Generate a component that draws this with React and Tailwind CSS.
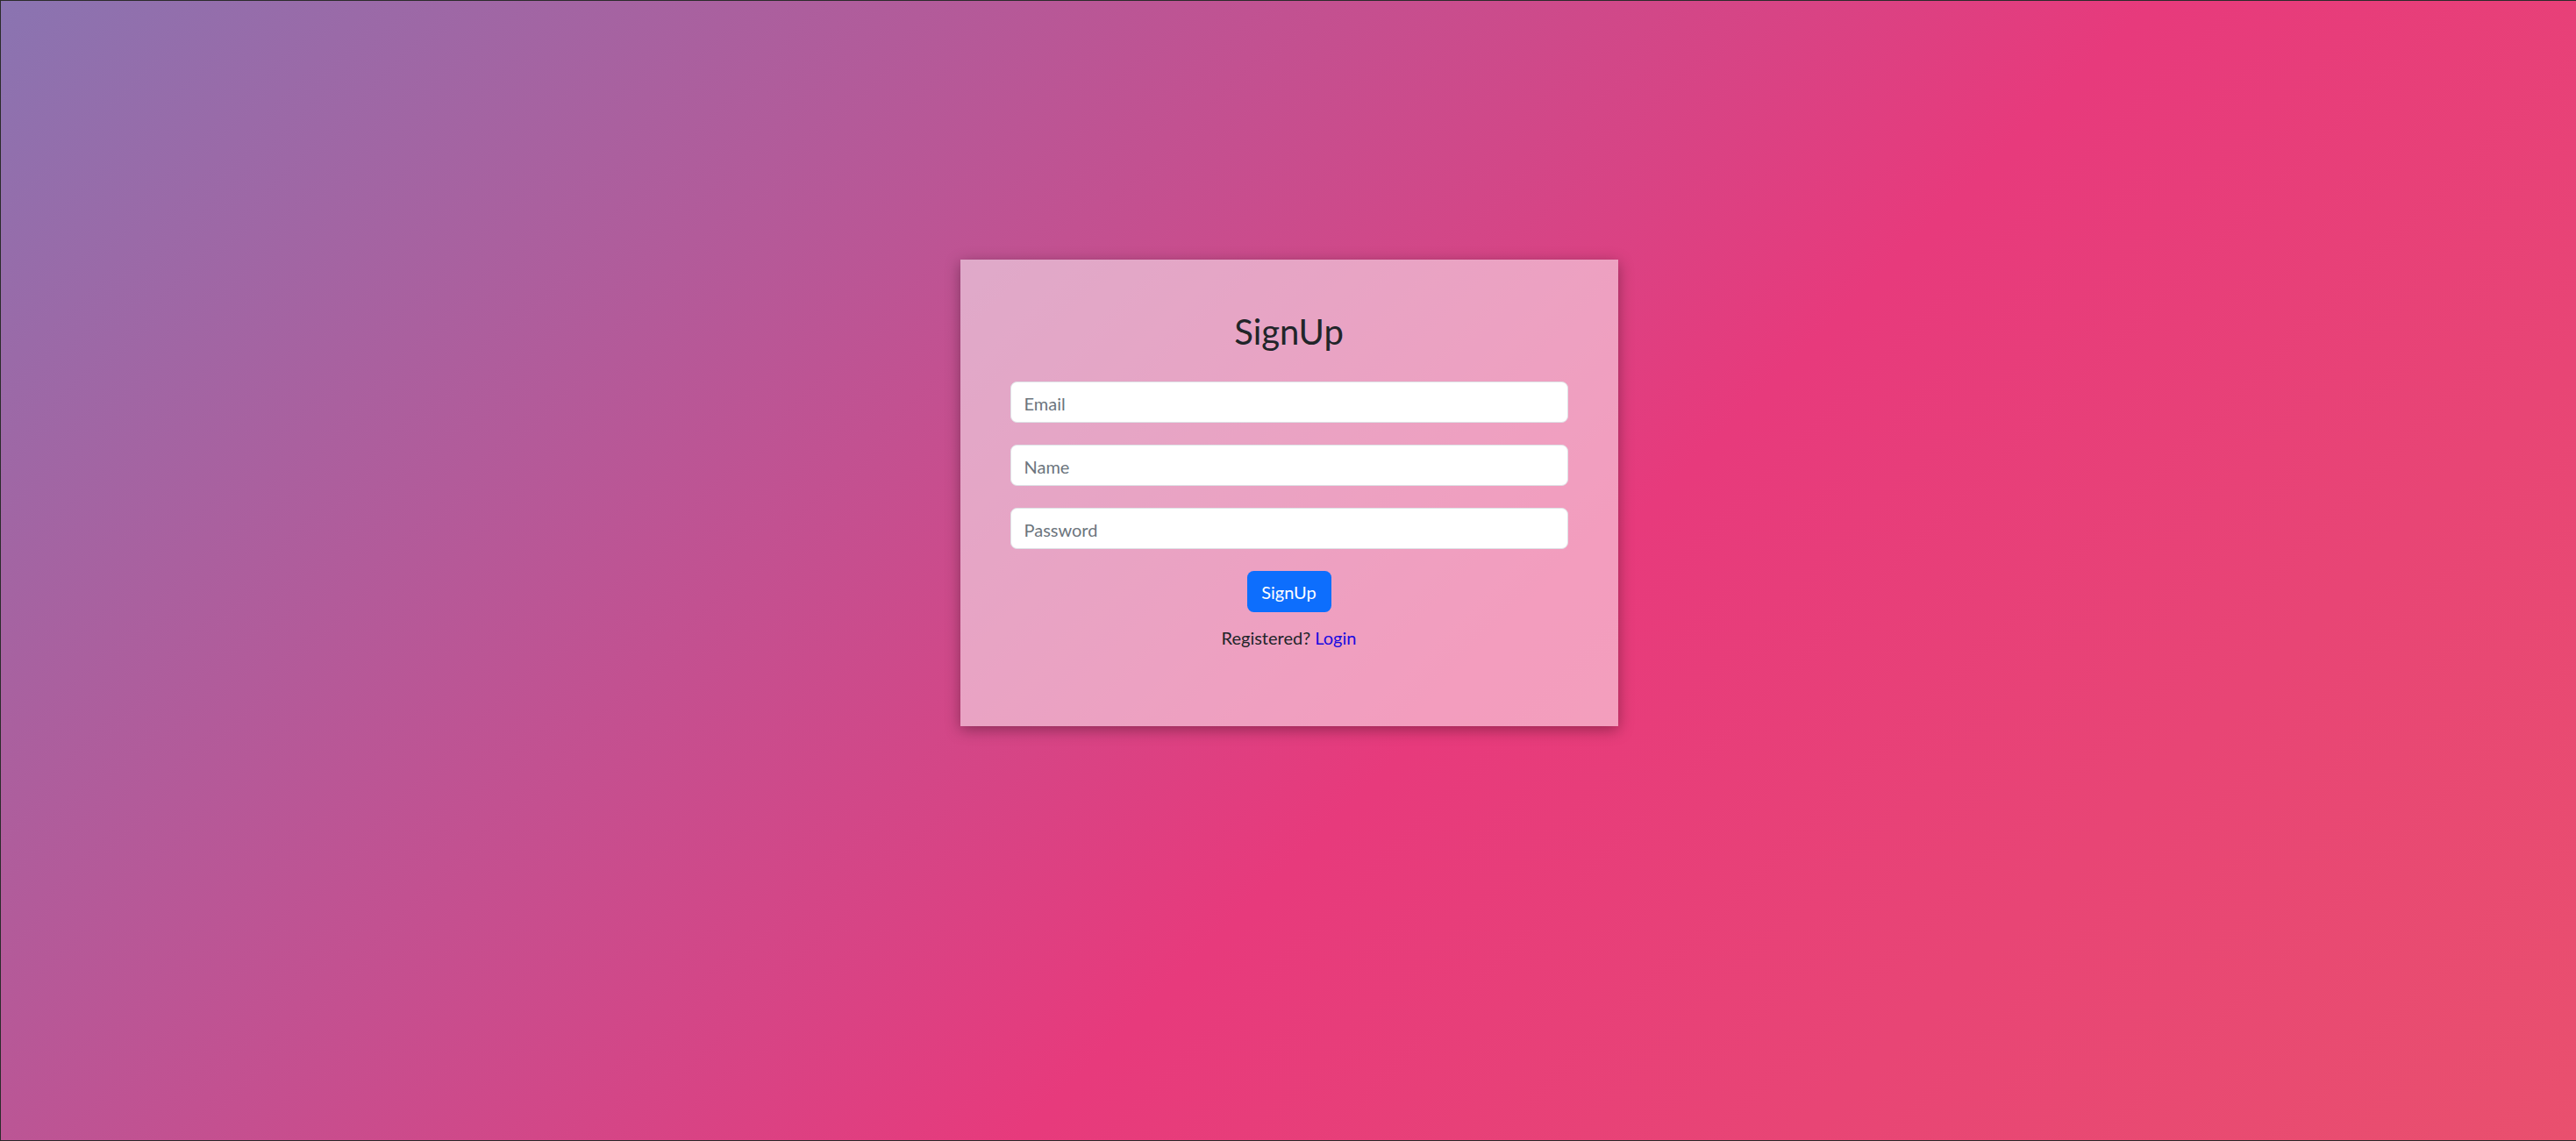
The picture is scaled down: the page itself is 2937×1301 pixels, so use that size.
export default function App() {
  return (
    <div
      className="min-h-screen w-full border-t border-l border-b border-[#2b2b2b] bg-[linear-gradient(135deg,#8a74b1_0%,#e73a7c_58%,#e9506e_100%)] flex justify-center pt-[295px]"
      style={{ fontFamily: "Lato, 'Noto Sans', sans-serif" }}
    >
      <div className="w-[750px] h-[532px] ml-[1px] bg-white/50 shadow-[0_4px_16px_rgba(0,0,0,0.35)] flex flex-col items-center pt-[58px]">
        <h2 className="text-[40px] leading-[48px] font-normal text-[#212529]">SignUp</h2>

        <form className="mt-[33px] w-[636px] flex flex-col gap-[25px]">
          <input
            type="email"
            placeholder="Email"
            className="h-[47px] w-full rounded-[7.5px] border border-[#dee2e6] bg-white px-[15px] pt-[2px] text-[20px] leading-[30px] text-[#212529] placeholder:text-[#6c757d] outline-none"
          />
          <input
            type="text"
            placeholder="Name"
            className="h-[47px] w-full rounded-[7.5px] border border-[#dee2e6] bg-white px-[15px] pt-[2px] text-[20px] leading-[30px] text-[#212529] placeholder:text-[#6c757d] outline-none"
          />
          <input
            type="password"
            placeholder="Password"
            className="h-[47px] w-full rounded-[7.5px] border border-[#dee2e6] bg-white px-[15px] pt-[2px] text-[20px] leading-[30px] text-[#212529] placeholder:text-[#6c757d] outline-none"
          />
          <div className="flex justify-center">
            <button
              type="button"
              className="h-[47px] w-[96px] rounded-[7.5px] bg-[#0d6efd] text-[20px] leading-[30px] text-white"
            >
              SignUp
            </button>
          </div>
        </form>

        <p className="mt-[14px] text-[20px] leading-[30px] text-[#212529]">
          Registered? <a href="#" className="text-[#1a0be0]">Login</a>
        </p>
      </div>
    </div>
  );
}
